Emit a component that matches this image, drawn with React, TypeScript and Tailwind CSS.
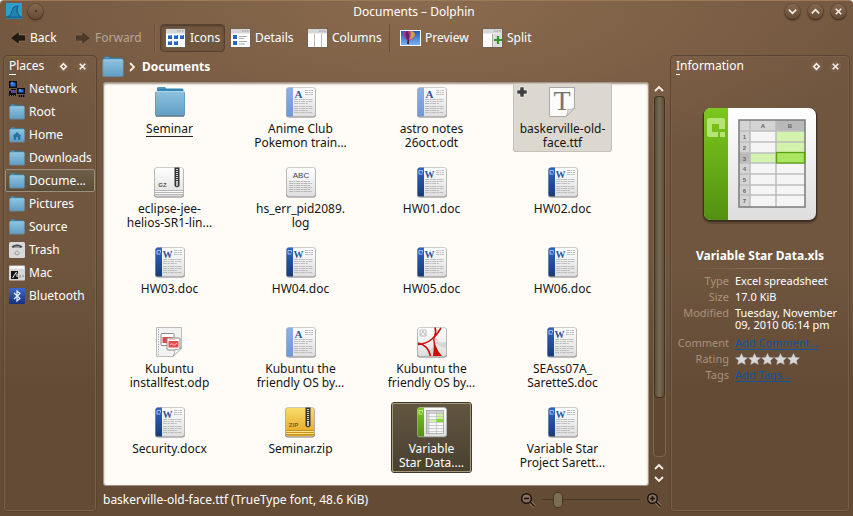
import type { ReactNode } from "react";

type FileKind = "folder" | "odt" | "ttf" | "gz" | "log" | "doc" | "odp" | "pdf" | "zip" | "xls";

interface FileEntry {
  lines: string[];
  kind: FileKind;
  state?: "hover" | "selected" | "focus";
}

const files: FileEntry[] = [
  { lines: ["Seminar"], kind: "folder", state: "focus" },
  { lines: ["Anime Club", "Pokemon train..."], kind: "odt" },
  { lines: ["astro notes", "26oct.odt"], kind: "odt" },
  { lines: ["baskerville-old-", "face.ttf"], kind: "ttf", state: "hover" },
  { lines: ["eclipse-jee-", "helios-SR1-lin..."], kind: "gz" },
  { lines: ["hs_err_pid2089.", "log"], kind: "log" },
  { lines: ["HW01.doc"], kind: "doc" },
  { lines: ["HW02.doc"], kind: "doc" },
  { lines: ["HW03.doc"], kind: "doc" },
  { lines: ["HW04.doc"], kind: "doc" },
  { lines: ["HW05.doc"], kind: "doc" },
  { lines: ["HW06.doc"], kind: "doc" },
  { lines: ["Kubuntu", "installfest.odp"], kind: "odp" },
  { lines: ["Kubuntu the", "friendly OS by..."], kind: "odt" },
  { lines: ["Kubuntu the", "friendly OS by..."], kind: "pdf" },
  { lines: ["SEAss07A_", "SaretteS.doc"], kind: "doc" },
  { lines: ["Security.docx"], kind: "doc" },
  { lines: ["Seminar.zip"], kind: "zip" },
  { lines: ["Variable", "Star Data...."], kind: "xls", state: "selected" },
  { lines: ["Variable Star", "Project Sarett..."], kind: "doc" },
];

function Gradients() {
  const stops: [string, string, string][] = [
    ["gFolder", "#8fc3df", "#5f9dc4"],
    ["gPaper", "#ffffff", "#dedede"],
    ["gBlue", "#2f66c4", "#173a78"],
    ["gSky", "#8fb0e6", "#6f97d8"],
    ["gGold", "#fbdc6c", "#e2a41c"],
    ["gGreen", "#7cc81c", "#539012"],
    ["gBt", "#3c68d0", "#16307c"],
    ["gSkyPhoto", "#1b55c0", "#7db4ee"],
  ];
  return (
    <svg className="absolute size-0" aria-hidden="true">
      <defs>
        {stops.map(([id, a, b]) => (
          <linearGradient key={id} id={id} x1="0" y1="0" x2="0" y2="1">
            <stop offset="0" stopColor={a} />
            <stop offset="1" stopColor={b} />
          </linearGradient>
        ))}
      </defs>
    </svg>
  );
}

function Folder({ className, home }: { className: string; home?: boolean }) {
  return (
    <svg viewBox="0 0 32 32" className={className} aria-hidden="true">
      <path d="M3 8V2.500Q3 1 4.500 1H10.500Q12 1 12 2.500H28Q29.500 2.500 29.500 4V8Z" fill="#3585b2" />
      <path d="M4 2H10.500" stroke="#5fa9cf" />
      <path d="M1 6.500Q1 5 2.500 5H29.500Q31 5 31 6.500V28.500Q31 30.500 29 30.500H3Q1 30.500 1 28.500Z" fill="url(#gFolder)" />
      <path d="M1.500 29V6.500M30.500 29V6.500" stroke="#5796bb" strokeWidth=".7" />
      <path d="M2 30H30" stroke="#6d7f8a" strokeWidth="1.300" />
      <path d="M2 5.500H30" stroke="#a9d6ec" fill="none" />
      {home && <path d="M16 10L7 18.500H9.500V26H14V20.500H18V26H22.500V18.500H25Z" fill="#2474a3" />}
    </svg>
  );
}

function TextLines() {
  const ys = [14, 16, 18, 21, 23, 25, 27];
  return (
    <g stroke="#bdbdbd" strokeWidth="1">
      {[4.5, 6.5, 8.5].map((y) => (
        <path key={y} d={`M20 ${y}H28`} strokeDasharray="3 .5 2 .5" />
      ))}
      {ys.map((y, i) => (
        <path key={y} d={`M9 ${y - 0.5}H${i % 3 === 2 ? 23 : 28}`} strokeDasharray="4 .6 2 .6" />
      ))}
    </g>
  );
}

function Paper({ fill = "url(#gPaper)" }: { fill?: string }) {
  return (
    <>
      <rect x="1" y="2" width="30" height="29.500" rx="3" fill="#7c7c7c" />
      <rect x="1.500" y="1.500" width="29" height="29" rx="2.500" fill={fill} stroke="#b9b9b9" strokeWidth=".7" />
    </>
  );
}

function Zipper() {
  return (
    <>
      <path d="M21.500 1.500H26.500V20Q24 22.500 21.500 20Z" fill="#353535" />
      <path d="M24 3V17" stroke="#d5d5d5" strokeWidth="2" strokeDasharray="1 1" />
      <rect x="23" y="16" width="2" height="4" fill="#bbb" />
    </>
  );
}

function Sheet() {
  return (
    <svg viewBox="0 0 112 112" className="size-full overflow-visible" aria-hidden="true">
      <rect x="-2" y="0" width="116" height="116" rx="9" fill="#000" opacity=".15" />
      <rect x="-1" y="0" width="114" height="114" rx="8" fill="#000" opacity=".35" />
      <rect width="112" height="112" rx="7" fill="url(#gPaper)" />
      <path d="M7 0H24V112H7Q0 112 0 105V7Q0 0 7 0Z" fill="url(#gGreen)" />
      <path d="M5 10H19Q21 10 21 12V21H15V16H8V24H14V29H5Q3 29 3 27V12Q3 10 5 10Z" fill="#b5e474" />
      <rect x="16" y="24" width="5" height="5" fill="#b5e474" />
      <rect x="35" y="12" width="66" height="87" fill="#f5f5f5" />
      <path d="M35 12H101V23H35ZM35 23H46V99H35Z" fill="#d4d4d4" />
      <path d="M72 12H101V23H72ZM35 45H46V55H35Z" fill="#b9b9b9" />
      <path d="M72 23H101V45H72ZM46 45H72V55H46Z" fill="#d3f2ad" />
      <path d="M35 23H101M35 34H101M35 45H101M35 55H101M35 66H101M35 77H101M35 87H101M46 12V99M72 12V99" stroke="#bdbdbd" strokeWidth="1.500" />
      <rect x="35" y="12" width="66" height="87" fill="none" stroke="#7b7b7b" strokeWidth="1.500" />
      <rect x="72.500" y="44.500" width="28" height="10.500" fill="#abe660" stroke="#5a9e16" strokeWidth="1.300" />
      <g fontFamily="Liberation Sans, sans-serif" fontSize="6" fontWeight="bold" fill="#666" textAnchor="middle">
        <text x="59" y="20">A</text>
        <text x="86" y="20">B</text>
        {[1, 2, 3, 4, 5, 6, 7].map((n) => (
          <text key={n} x="40.500" y={20.5 + n * 10.7}>{n}</text>
        ))}
      </g>
    </svg>
  );
}

function SmallSheet() {
  return (
    <>
      <Paper />
      <path d="M4 1.500H8V30.500H4Q1.500 30.500 1.500 28V4Q1.500 1.500 4 1.500Z" fill="url(#gGreen)" />
      <path d="M6.500 8H3V4.500H6.500V6.500" stroke="#c4f08a" fill="none" />
      <rect x="10.500" y="4.500" width="17" height="23" fill="#f7f7f7" />
      <path d="M10.500 4.500H27.500V7.500H10.500ZM10.500 7H13V27.500H10.500Z" fill="#d0d0d0" />
      <path d="M20.500 7.500H27.500V13H20.500ZM13 13.500H20.500V16H13Z" fill="#cdf2a0" />
      <path d="M10 7.500H28M10 10.500H28M10 13.500H28M10 16.500H28M10 19.500H28M10 22.500H28M10 25.500H28M13 4V28M20.500 4V28" stroke="#bbb" strokeWidth=".7" />
      <rect x="10.500" y="4.500" width="17" height="23" fill="none" stroke="#9a9a9a" strokeWidth=".7" />
      <rect x="20.500" y="13" width="7" height="3" fill="#86d435" />
    </>
  );
}

function FileIcon({ kind }: { kind: FileKind }) {
  if (kind === "folder") return <Folder className="size-8" />;
  let art: ReactNode = null;
  if (kind === "xls") {
    art = <SmallSheet />;
  } else if (kind === "doc" || kind === "odt") {
    const doc = kind === "doc";
    art = (
      <>
        <Paper />
        <path d="M4 1.500H8V30.500H4Q1.500 30.500 1.500 28V4Q1.500 1.500 4 1.500Z" fill={doc ? "url(#gBlue)" : "url(#gSky)"} />
        {doc && <path d="M6.500 8H3V4.500H6.500V6.500" stroke="#a5c1f1" strokeWidth="1" fill="none" />}
        <text x="13.500" y="11.500" textAnchor="middle" fontFamily="Liberation Serif, serif" fontSize={doc ? 10 : 11} fontWeight="bold" fill="#2e569c">
          {doc ? "W" : "A"}
        </text>
        <TextLines />
      </>
    );
  } else if (kind === "ttf") {
    art = (
      <>
        <path d="M3.500 1.500H28.500V22L20 30.500H3.500Z" fill="#fbfbfb" stroke="#a7a7a7" />
        <path d="M28.500 22Q23 24.500 22 23Q22 28 20 30.500Z" fill="#ddd" stroke="#aaa" strokeWidth=".7" />
        <text x="16" y="24" textAnchor="middle" fontFamily="Liberation Serif, serif" fontSize="28" fill="#757575">T</text>
      </>
    );
  } else if (kind === "gz" || kind === "zip") {
    const zip = kind === "zip";
    art = (
      <>
        <Paper fill={zip ? "url(#gGold)" : "url(#gPaper)"} />
        <path d="M2 24.500H30M2 26.500H30M2 28.500H30" stroke={zip ? "#c28c1b" : "#aaa"} strokeWidth=".8" />
        <path d="M2 25.500H30M2 27.500H30" stroke={zip ? "#fff0a9" : "#fff"} strokeWidth=".8" />
        <Zipper />
        <text x="9.500" y="21" textAnchor="middle" fontFamily="Liberation Sans, sans-serif" fontSize="6" fontWeight="bold" fill={zip ? "#80601c" : "#555"}>
          {zip ? "ZIP" : "GZ"}
        </text>
      </>
    );
  } else if (kind === "log") {
    art = (
      <>
        <Paper />
        <text x="16" y="11.500" textAnchor="middle" fontFamily="Liberation Sans, sans-serif" fontSize="8" fill="#444">ABC</text>
        <g stroke="#b0b0b0" strokeWidth=".9">
          {[15.5, 17.5, 19.5, 21.5, 23.5, 25.5].map((y, i) => (
            <path key={y} d={`M4 ${y}H${i % 2 ? 27 : 25}`} strokeDasharray="4 .6 2 .6" />
          ))}
        </g>
      </>
    );
  } else if (kind === "odp") {
    art = (
      <>
        <path d="M3.500 1.500H28.500V22L20 30.500H3.500Z" fill="#f2f2f2" stroke="#bcbcbc" />
        <path d="M5.500 3V29" stroke="#a1a1a1" strokeDasharray="1 1.500" />
        <rect x="8" y="7.500" width="13" height="12" rx="1" fill="#fff" stroke="#888" />
        <rect x="9.500" y="11" width="10" height="6" fill="#d94b4b" />
        <rect x="14" y="12" width="13" height="12" rx="1" fill="#fff" stroke="#888" />
        <rect x="15.500" y="15" width="10" height="6.500" fill="#e24f4f" />
        <path d="M17 19L19 17.500L21 19.500L24 17M16 13.500H22" stroke="#ffc5c5" fill="none" />
        <path d="M28.500 22Q23 24.500 22 23Q22 28 20 30.500Z" fill="#fff" stroke="#999" strokeWidth=".7" />
      </>
    );
  } else if (kind === "pdf") {
    art = (
      <>
        <Paper />
        <path d="M21 11Q20 18 30 16V22Q20 21 19 14ZM4 30Q12 30 17 20L19 30Z" fill="#d7d7d7" />
        <path d="M4 4H10V10H4ZM5 9L7 5L9 9" fill="none" stroke="#bbb" />
        <path d="M19 9Q16.500 19 26 30H17Q18.500 20 17 13Z" fill="#cc0d08" />
        <path d="M19 1.500Q20.500 6 18.500 11" stroke="#cc0d08" strokeWidth="1.600" fill="none" />
        <path d="M25 2Q21 9 16 13Q10 18 2 18.500M2 17Q12 19 14.500 30" stroke="#cc0d08" strokeWidth="1.600" fill="none" />
      </>
    );
  }
  return <svg viewBox="0 0 32 32" className="size-8" aria-hidden="true">{art}</svg>;
}

function FileItem({ file }: { file: FileEntry }) {
  const look =
    file.state === "selected"
      ? "border-[#a3977c] bg-linear-to-b from-[#625640] to-[#494030] text-white outline outline-[#41382a]"
      : file.state === "hover"
        ? "border-[#c6c1b8] bg-[#dcd8d0] text-[#151515]"
        : "border-transparent text-[#151515]";
  return (
    <li className="flex justify-center">
      <button type="button" className={`relative flex h-[69px] flex-col items-center rounded-xs border px-1.5 pt-0.5 text-[12px] leading-[14px] whitespace-nowrap ${look}`}>
        {file.state === "hover" && (
          <svg viewBox="0 0 12 12" className="absolute top-0.5 left-0.5 size-3" aria-hidden="true">
            <path d="M4 1H8V4H11V8H8V11H4V8H1V4H4Z" fill="#404040" stroke="#fff" strokeOpacity=".5" />
          </svg>
        )}
        <FileIcon kind={file.kind} />
        <span className="mt-1 flex flex-col items-center">
          {file.lines.map((line) => (
            <span key={line} className={file.state === "focus" ? "border-b border-[#222]" : ""}>{line}</span>
          ))}
        </span>
      </button>
    </li>
  );
}

function Arrow({ dir }: { dir: "left" | "right" }) {
  return (
    <svg viewBox="0 0 16 16" className={dir === "right" ? "size-4 shrink-0 rotate-180 opacity-50" : "size-4 shrink-0"} aria-hidden="true">
      <path d="M.5 8L9 1.500V5H15.500V11H9V14.500Z" fill="#211912" stroke="#a68a70" strokeOpacity=".6" strokeWidth=".8" />
    </svg>
  );
}

function ViewIcon({ kind }: { kind: "icons" | "details" | "columns" | "split" | "preview" }) {
  if (kind === "preview")
    return (
      <svg viewBox="0 0 21 20" className="h-5 w-[21px] shrink-0" aria-hidden="true">
        <rect x=".5" y="2.500" width="20" height="15" fill="url(#gSkyPhoto)" stroke="#fff" />
        <path d="M3 6Q3 3 8 3H11Q15 3 15 7Q14 11 8.500 13Q4 11 3 6Z" fill="#b53a83" />
        <path d="M6 3.500Q4 8 8.500 13Q10 8 8 3Z" fill="#5f246c" />
        <path d="M10 3Q12 7 9 12Q15 10 15 6Q14 3 10 3Z" fill="#d8954f" />
        <path d="M12 4L13 7L11 10" stroke="#a0c34c" fill="none" />
        <path d="M7.500 12H9V16H7Z" fill="#5d1c20" />
      </svg>
    );
  return (
    <svg viewBox="0 0 21 20" className="h-5 w-[21px] shrink-0" aria-hidden="true">
      <rect x=".5" y=".5" width="20" height="19" fill="#fff" stroke="#54402e" strokeOpacity=".7" />
      <rect x="1" y="1" width="19" height="4.500" fill="#d6d6d6" />
      <path d="M12 3H19" stroke="#aaa" strokeWidth="1.500" strokeDasharray="1.500 1" />
      {kind === "icons" &&
        [[3, 7], [9, 7], [15, 7], [3, 13], [9, 13]].map(([x, y]) => (
          <g key={`${x}-${y}`}>
            <rect x={x} y={y} width="4" height="4" fill="#2565bd" />
            <path d={`M${x} ${y + 0.5}h3`} stroke="#79b1ec" />
          </g>
        ))}
      {kind === "details" && (
        <>
          <path d="M3 7H7V11H3ZM3 13H7V17H3Z" fill="#2565bd" />
          <path d="M9 8.500H17M9 10.500H14M9 13.500H17M9 16H15" stroke="#aaa" />
        </>
      )}
      {kind === "columns" && <path d="M7.500 6V19M14.500 6V19" stroke="#bcbcbc" />}
      {kind === "split" && (
        <>
          <rect x="11" y="6" width="9" height="13" fill="#ddd" />
          <path d="M10.500 6V19" stroke="#aaa" />
          <path d="M16 8V16M12 12H20" stroke="#2d9a27" strokeWidth="2.200" />
        </>
      )}
    </svg>
  );
}

function ToolButton({ icon, label, className, muted }: { icon: ReactNode; label: string; className: string; muted?: boolean }) {
  return (
    <button type="button" disabled={muted} className={`flex h-7 items-center gap-1 rounded border px-1 text-[12px] ${muted ? "text-[#b9a58f]" : "text-white"} ${className}`}>
      {icon}
      {label}
    </button>
  );
}

function Divider() {
  return <span className="mx-1 h-7 w-0.5 shrink-0 border-r border-l border-r-[#846850] border-l-[#67503b]" />;
}

function Glyph({ d, className = "size-3" }: { d: string; className?: string }) {
  return (
    <svg viewBox="0 0 12 12" className={className} fill="none" stroke="#f5efe6" strokeWidth="1.800" aria-hidden="true">
      <path d={d} />
    </svg>
  );
}

const CLOSE = "M3 3L9 9M9 3L3 9";
const UP = "M2 8L6 4L10 8";
const DOWN = "M2 4L6 8L10 4";

function WindowButton({ label, d }: { label: string; d?: string }) {
  return (
    <button type="button" aria-label={label} className="flex size-[15px] items-center justify-center rounded-full bg-linear-to-b from-[#866850] to-[#654b36] shadow-[0_1px_2px_#2f2015,0_0_1px_#2f2015]">
      {d ? <Glyph d={d} className="size-[11px]" /> : <span className="size-0.5 rounded-full bg-[#3d2c1e]" />}
    </button>
  );
}

function PanelHeader({ title }: { title: string }) {
  return (
    <header className="flex h-5 items-center gap-2 pr-[7px] pl-1">
      <h2 className="mr-auto text-[12px] leading-4">
        <span className="border-b border-white">{title[0]}</span>
        {title.slice(1)}
      </h2>
      <button type="button" aria-label={`Float ${title}`} className="rounded-full bg-[#7b614b]">
        <Glyph d="M6 3L9 6L6 9L3 6Z" className="size-[11px]" />
      </button>
      <button type="button" aria-label={`Close ${title}`} className="rounded-full bg-[#7b614b]">
        <Glyph d={CLOSE} className="size-[11px]" />
      </button>
    </header>
  );
}

function PlaceIcon({ kind }: { kind: string }) {
  if (kind === "folder" || kind === "home") return <Folder className="size-4 shrink-0" home={kind === "home"} />;
  return (
    <svg viewBox="0 0 16 16" className="size-4 shrink-0" aria-hidden="true">
      {kind === "network" && (
        <>
          <path d="M0 0H8V7H0ZM8 7H16V13H8ZM0 14V10H2V8H7V15H0ZM9 14H16V16H9Z" fill="#0b0d18" />
          <path d="M1.500 1.500H6.500V5.500H1.500ZM9.500 8.500H14.500V11.500H9.500Z" fill="#2b72e6" />
          <path d="M2 9H7V12H2Z" fill="#5c46a5" />
          <path d="M2 2H4M10 9H12" stroke="#9dcbff" />
          <path d="M1 14.500H7M9 15H16" stroke="#777" strokeDasharray="1 1" />
        </>
      )}
      {kind === "trash" && (
        <>
          <rect width="16" height="16" rx="1.500" fill="#d9d9d9" />
          <path d="M2.500 4.500Q8 .5 13.500 4.500L12 6Q8 4 4 6Z" fill="#444" />
          <ellipse cx="8" cy="5" rx="3" ry="1" fill="#999" />
          <path d="M6 10.500L8 8.500L10 10.500V12L8 13L6 12Z" fill="none" stroke="#999" />
        </>
      )}
      {kind === "mac" && (
        <>
          <rect y=".5" width="16" height="15" rx="1" fill="#d5d5d5" />
          <path d="M1 1H15V4H1Z" fill="#f5f5f5" />
          <rect x="2" y="6" width="7" height="8" fill="#151515" />
          <path d="M3.500 13L7.500 7M8 8.500V12" stroke="#fff" />
          <path d="M11 10V13M13 11H15" stroke="#888" />
        </>
      )}
      {kind === "bluetooth" && (
        <>
          <rect width="16" height="16" rx="1" fill="url(#gBt)" />
          <path d="M5 5L11 10.500L8 13V3L11 5.500L5 11" fill="none" stroke="#e8f4ff" strokeWidth="1.200" />
        </>
      )}
    </svg>
  );
}

const places: [string, string][] = [
  ["Network", "network"],
  ["Root", "folder"],
  ["Home", "home"],
  ["Downloads", "folder"],
  ["Docume...", "folder"],
  ["Pictures", "folder"],
  ["Source", "folder"],
  ["Trash", "trash"],
  ["Mac", "mac"],
  ["Bluetooth", "bluetooth"],
];

function Magnifier({ plus }: { plus?: boolean }) {
  return (
    <svg viewBox="0 0 16 16" className="size-4" aria-hidden="true">
      <path d="M9.500 9.500L14.500 14.500" stroke="#9b826b" strokeWidth="3.200" />
      <circle cx="6.500" cy="6.500" r="4.800" fill="#8b715b" stroke="#191410" strokeWidth="1.500" />
      <path d="M10 10L14.500 14.500" stroke="#191410" strokeWidth="1.600" />
      <path d={plus ? "M4 6.500H9M6.500 4V9" : "M4 6.500H9"} stroke="#191410" strokeWidth="1.600" />
    </svg>
  );
}

function Stars() {
  return (
    <span className="flex" role="img" aria-label="Rating">
      {[0, 1, 2, 3, 4].map((n) => (
        <svg key={n} viewBox="0 0 13 12" className="h-3 w-[13px]" aria-hidden="true">
          <path d="M6.500 .5L8.300 4.200L12.500 4.700L9.500 7.500L10.300 11.500L6.500 9.600L2.700 11.500L3.500 7.500L.5 4.700L4.700 4.200Z" fill="#d9d9d9" stroke="#aaa" strokeWidth=".5" />
        </svg>
      ))}
    </span>
  );
}

function InfoRow({ label, children }: { label: string; children: ReactNode }) {
  return (
    <div className="flex gap-1.5">
      <dt className="w-[55px] shrink-0 text-right text-[#a8937d]">{label}</dt>
      <dd className="min-w-0 text-white">{children}</dd>
    </div>
  );
}

const panel = "rounded border border-[#5b4431] shadow-[inset_0_0_0_1px_#7b6049]";

export default function App() {
  return (
    <div className="flex min-h-screen w-full flex-col overflow-hidden rounded-t border-t border-[#9c7a58] bg-[radial-gradient(ellipse_55%_170px_at_50%_0,#8b6b4f_0%,transparent_100%),linear-gradient(to_bottom,#72573f_0,#70563f_50%,#634b36_75%)] font-['Noto_Sans',sans-serif] text-white">
      <Gradients />
      <header className="flex h-5 items-center gap-1.5 pr-[7px] pl-1.5">
        <svg viewBox="0 0 16 16" className="size-4" aria-hidden="true">
          <rect width="16" height="16" fill="#2e9fcb" />
          <path d="M1 14Q5 13 6 8Q7 3 12 3Q10 7 12 11Q13 13 15 14" fill="#2382ae" stroke="#175f88" strokeWidth="1.200" />
          <path d="M0 14.500H16" stroke="#1a668e" strokeWidth="2" />
        </svg>
        <WindowButton label="Window menu" />
        <h1 className="flex-1 pt-0.5 text-center text-[12px]">Documents – Dolphin</h1>
        <div className="flex gap-2">
          <WindowButton label="Minimize" d={DOWN} />
          <WindowButton label="Maximize" d={UP} />
          <WindowButton label="Close" d={CLOSE} />
        </div>
      </header>

      <nav aria-label="Main toolbar" className="flex h-[34px] items-center pl-[5px]">
        <ToolButton icon={<Arrow dir="left" />} label="Back" className="w-[65px] border-transparent" />
        <ToolButton icon={<Arrow dir="right" />} label="Forward" muted className="w-20 border-transparent" />
        <Divider />
        <ToolButton icon={<ViewIcon kind="icons" />} label="Icons" className="w-[65px] border-[#574130] bg-[#6c523c]/70 shadow-[inset_0_1px_2px_#4d3928]" />
        <ToolButton icon={<ViewIcon kind="details" />} label="Details" className="w-[77px] border-transparent" />
        <ToolButton icon={<ViewIcon kind="columns" />} label="Columns" className="w-[83px] border-transparent" />
        <Divider />
        <ToolButton icon={<ViewIcon kind="preview" />} label="Preview" className="w-[82px] border-transparent" />
        <ToolButton icon={<ViewIcon kind="split" />} label="Split" className="border-transparent" />
      </nav>

      <div className="flex flex-1 gap-1 px-[3px]">
        <aside className={`mb-1 w-[94px] shrink-0 px-px ${panel}`}>
          <PanelHeader title="Places" />
          <ul className="flex flex-col pt-px">
            {places.map(([name, kind]) => (
              <li key={name}>
                <a
                  href="#"
                  className={`flex h-[23px] items-center gap-1 rounded-xs border px-[3px] text-[12px] ${name === "Docume..." ? "border-[#9c9078] bg-linear-to-b from-[#6e5f48] to-[#5b4d38]" : "border-transparent"}`}
                >
                  <PlaceIcon kind={kind} />
                  {name}
                </a>
              </li>
            ))}
          </ul>
        </aside>

        <main className="flex min-w-0 flex-1 flex-col">
          <nav aria-label="Location" className="flex h-7 items-center gap-0.5 pb-1 pl-px">
            <Folder className="size-[22px]" />
            <Glyph d="M4 2L8 6L4 10" />
            <a href="#" className="pl-0.5 text-[12px] font-bold">Documents</a>
          </nav>
          <div className="flex gap-1 pl-[3px]">
            <section aria-label="Files" className="h-[402px] flex-1 overflow-hidden rounded-xs bg-[#fffcf7] shadow-[0_0_0_1px_#a29587,inset_0_1px_2px_#a29587]">
              <ul className="grid grid-cols-[repeat(auto-fill,131px)] gap-y-[11px]">
                {files.map((file) => (
                  <FileItem key={file.lines.join(" ") + file.kind} file={file} />
                ))}
              </ul>
            </section>
            <div className="flex w-[14px] flex-col items-center">
              <button type="button" aria-label="Scroll up"><Glyph d={UP} /></button>
              <div className="flex w-[13px] flex-1 rounded border border-[#80654e] bg-[#604732]">
                <div className="h-[84%] flex-1 rounded-sm border border-[#3f3224] bg-linear-to-r from-[#5b4e39] via-[#766b52] to-[#5b4e39]" />
              </div>
              <button type="button" aria-label="Page up" className="mt-1"><Glyph d={UP} /></button>
              <button type="button" aria-label="Scroll down"><Glyph d={DOWN} /></button>
            </div>
          </div>
          <footer className="flex h-7 items-center gap-1.5 pt-px pr-1 pl-0.5">
            <p className="mr-auto text-[12px]">baskerville-old-face.ttf (TrueType font, 48.6 KiB)</p>
            <Magnifier />
            <input
              type="range"
              aria-label="Icon size"
              min={0}
              max={100}
              defaultValue={12}
              className="h-[18px] w-[98px] appearance-none bg-[linear-gradient(#463425,#463425)] bg-[length:100%_1px] bg-center bg-no-repeat [&::-webkit-slider-thumb]:h-4 [&::-webkit-slider-thumb]:w-2.5 [&::-webkit-slider-thumb]:appearance-none [&::-webkit-slider-thumb]:rounded-sm [&::-webkit-slider-thumb]:border [&::-webkit-slider-thumb]:border-[#43372a] [&::-webkit-slider-thumb]:bg-[#7b6d54]"
            />
            <Magnifier plus />
          </footer>
        </main>

        <aside className={`mb-1 w-[180px] shrink-0 px-px ${panel}`}>
          <PanelHeader title="Information" />
          <div className="mx-auto mt-8 size-28">
            <Sheet />
          </div>
          <h3 className="mt-7 text-center text-[12px] leading-4 font-bold">Variable Star Data.xls</h3>
          <hr className="mx-4 mt-1 h-px border-0 bg-linear-to-r from-transparent via-[#8b705a] to-transparent" />
          <dl className="mt-1.5 flex flex-col gap-1 pl-0.5 text-[11px] leading-3">
            <InfoRow label="Type">Excel spreadsheet</InfoRow>
            <InfoRow label="Size">17.0 KiB</InfoRow>
            <InfoRow label="Modified">
              <span className="block pb-0.5">Tuesday, November<br />09, 2010 06:14 pm</span>
            </InfoRow>
            <InfoRow label="Comment"><a href="#" className="text-[#0f55a0] underline underline-offset-2">Add Comment...</a></InfoRow>
            <InfoRow label="Rating"><Stars /></InfoRow>
            <InfoRow label="Tags"><a href="#" className="text-[#0f55a0] underline underline-offset-2">Add Tags...</a></InfoRow>
          </dl>
        </aside>
      </div>
    </div>
  );
}
